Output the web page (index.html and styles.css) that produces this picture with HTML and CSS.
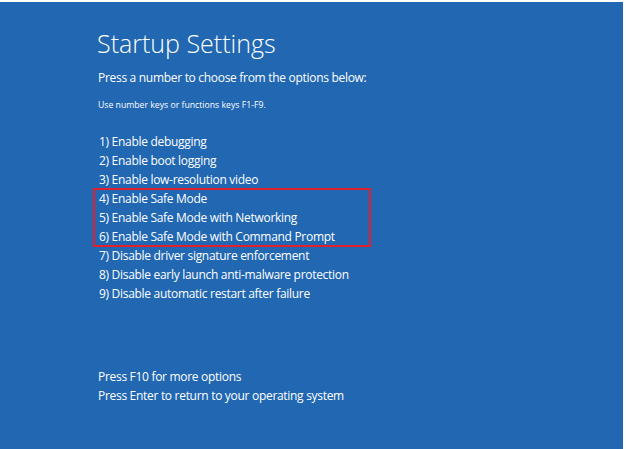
FILE: index.html
```html
<!DOCTYPE html>
<html lang="en">
<head>
    <meta charset="UTF-8">
    <meta name="viewport" content="width=device-width, initial-scale=1.0">
    <title>Startup Settings</title>
    <link rel="stylesheet" href="styles.css">
</head>
<body>
    <div class="screen">
        <h1>Startup Settings</h1>
        <p class="prompt">Press a number to choose from the options below:</p>
        <p class="hint">Use number keys or functions keys F1-F9.</p>

        <ul class="options">
            <li>1) Enable debugging</li>
            <li>2) Enable boot logging</li>
            <li>3) Enable low-resolution video</li>
            <li class="highlight">
                <ul>
                    <li>4) Enable Safe Mode</li>
                    <li>5) Enable Safe Mode with Networking</li>
                    <li>6) Enable Safe Mode with Command Prompt</li>
                </ul>
            </li>
            <li>7) Disable driver signature enforcement</li>
            <li>8) Disable early launch anti-malware protection</li>
            <li>9) Disable automatic restart after failure</li>
        </ul>

        <div class="footer">
            <p>Press F10 for more options</p>
            <p>Press Enter to return to your operating system</p>
        </div>
    </div>
</body>
</html>
```

FILE: styles.css
```css
body {
    margin: 0;
    padding: 0;
    background-color: #fff;
    font-family: 'Open Sans', 'Noto Sans', sans-serif;
}
.screen {
    width: 623px;
    height: 447px;
    margin-top: 2px;
    background-color: #2167b2;
    color: #fff;
    padding-left: 97px;
    box-sizing: border-box;
    overflow: hidden;
}
h1 {
    margin: 0;
    padding-top: 23px;
    font-size: 25px;
    font-weight: 300;
    line-height: 36px;
}
.prompt {
    margin: 8px 0 0 1px;
    font-size: 12px;
    letter-spacing: -0.3px;
    line-height: 18px;
}
.hint {
    margin: 11px 0 0 1px;
    font-size: 8.7px;
    line-height: 14px;
}
.options {
    list-style: none;
    margin: 20px 0 0 2px;
    padding: 0;
    font-size: 12px;
    letter-spacing: -0.3px;
    line-height: 19px;
}
.options ul {
    list-style: none;
    margin: 0;
    padding: 0;
}
.highlight {
    width: 276px;
    margin-left: -5px;
    padding-left: 5px;
    box-sizing: border-box;
    outline: 2px solid #e3202b;
    outline-offset: -1px;
}
.footer {
    margin-top: 64px;
    margin-left: 1px;
    font-size: 12px;
    letter-spacing: -0.3px;
    line-height: 19px;
}
.footer p {
    margin: 0;
}
```
